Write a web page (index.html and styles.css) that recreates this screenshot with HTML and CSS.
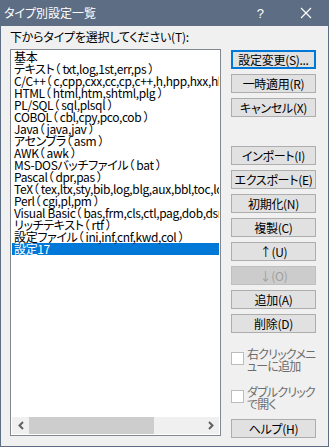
FILE: index.html
```html
<!DOCTYPE html>
<html lang="ja">
<head>
  <meta charset="UTF-8" />
  <meta name="viewport" content="width=device-width, initial-scale=1.0" />
  <title>タイプ別設定一覧</title>
  <link rel="stylesheet" href="styles.css">
</head>
<body>
  <div class="window">
    <div class="titlebar">
      <span class="title">タイプ別設定一覧</span>
      <span class="help">?</span>
      <span class="close">
        <svg width="12" height="12" viewBox="0 0 12 12"><path d="M1 1L11 11M11 1L1 11" stroke="#fff" stroke-width="1.2" fill="none"/></svg>
      </span>
    </div>
    <div class="content">
      <div class="left">
        <div class="caption">下からタイプを選択してください(T):</div>
        <div class="listbox">
          <ul class="items">
            <li>基本</li>
            <li>テキスト（ txt,log,1st,err,ps ）</li>
            <li>C/C++（ c,cpp,cxx,cc,cp,c++,h,hpp,hxx,hh,hh,inl ）</li>
            <li>HTML（ html,htm,shtml,plg ）</li>
            <li>PL/SQL（ sql,plsql ）</li>
            <li>COBOL（ cbl,cpy,pco,cob ）</li>
            <li>Java（ java,jav ）</li>
            <li>アセンブラ（ asm ）</li>
            <li>AWK（ awk ）</li>
            <li>MS-DOSバッチファイル（ bat ）</li>
            <li>Pascal（ dpr,pas ）</li>
            <li>TeX（ tex,ltx,sty,bib,log,blg,aux,bbl,toc,lof,lot ）</li>
            <li>Perl（ cgi,pl,pm ）</li>
            <li>Visual Basic（ bas,frm,cls,ctl,pag,dob,dsr ）</li>
            <li>リッチテキスト（ rtf ）</li>
            <li>設定ファイル（ ini,inf,cnf,kwd,col ）</li>
            <li class="selected">設定17</li>
          </ul>
          <div class="hscroll">
            <span class="arrow">
              <svg width="8" height="9" viewBox="0 0 8 9"><path d="M6 1L2.5 4.5L6 8" stroke="#606060" stroke-width="2" fill="none"/></svg>
            </span>
            <div class="track"><div class="thumb"></div></div>
            <span class="arrow">
              <svg width="8" height="9" viewBox="0 0 8 9"><path d="M2 1L5.5 4.5L2 8" stroke="#606060" stroke-width="2" fill="none"/></svg>
            </span>
          </div>
        </div>
      </div>
      <div class="right">
        <button class="default">設定変更(S)...</button>
        <button>一時適用(R)</button>
        <button>キャンセル(X)</button>
        <button class="group">インポート(I)</button>
        <button>エクスポート(E)</button>
        <button>初期化(N)</button>
        <button>複製(C)</button>
        <button>↑(U)</button>
        <button disabled>↓(O)</button>
        <button>追加(A)</button>
        <button>削除(D)</button>
        <label class="check first">
          <span class="box"></span>
          <span class="text">右クリックメニ<br>ューに追加</span>
        </label>
        <label class="check">
          <span class="box"></span>
          <span class="text">ダブルクリック<br>で開く</span>
        </label>
        <button class="help-btn">ヘルプ(H)</button>
      </div>
    </div>
  </div>
</body>
</html>
```

FILE: styles.css
```css
* {
  margin: 0;
  padding: 0;
  box-sizing: border-box;
}

body {
  font-family: "Noto Sans CJK JP", "Liberation Sans", sans-serif;
  font-size: 12px;
  font-feature-settings: "palt";
  color: #000;
  background: #f0f0f0;
}

.window {
  width: 329px;
  height: 447px;
  background: #f0f0f0;
  border: 1px solid #5d6d83;
  border-top: none;
  display: flex;
  flex-direction: column;
  overflow: hidden;
}

.titlebar {
  flex: none;
  height: 26px;
  background: #5d6d83;
  color: #fff;
  display: flex;
  align-items: center;
  padding-left: 3px;
}

.title {
  font-size: 12px;
  line-height: 14px;
}

.help {
  margin-left: auto;
  font-size: 13px;
  font-family: "Liberation Sans", sans-serif;
}

.close {
  display: flex;
  margin-left: 36px;
  margin-right: 16px;
}

.content {
  flex: 1;
  min-height: 0;
  display: flex;
  padding: 0 12px 0 9px;
  gap: 10px;
}

.left {
  width: 211px;
  display: flex;
  flex-direction: column;
}

.caption {
  line-height: 12px;
  margin-top: 5px;
  margin-bottom: 6px;
  white-space: nowrap;
  letter-spacing: -0.2px;
}

.listbox {
  height: 387px;
  flex: none;
  border: 1px solid #828790;
  background: #fff;
  padding: 1px;
  display: flex;
  flex-direction: column;
}

.items {
  list-style: none;
  flex: 1;
  overflow: hidden;
}

.items li {
  height: 12px;
  line-height: 12px;
  padding-left: 2px;
  white-space: nowrap;
  letter-spacing: -0.35px;
}

.items li.selected {
  background: #0078d7;
  color: #fff;
}

.hscroll {
  height: 17px;
  flex: none;
  background: #f0f0f0;
  display: flex;
}

.arrow {
  width: 17px;
  display: flex;
  align-items: center;
  justify-content: center;
}

.track {
  flex: 1;
  display: flex;
}

.thumb {
  width: 125px;
  background: #cdcdcd;
}

.right {
  width: 86px;
  display: flex;
  flex-direction: column;
  gap: 5px;
  padding-top: 24px;
}

button {
  height: 19px;
  flex: none;
  font-family: inherit;
  font-size: 12px;
  line-height: 12px;
  letter-spacing: -0.3px;
  white-space: nowrap;
  background: #e1e1e1;
  border: 1px solid #adadad;
  color: #000;
  font-feature-settings: "palt";
}

button.default {
  border: 2px solid #0078d7;
}

button.group {
  margin-top: 24px;
}

button:disabled {
  background: #cccccc;
  border-color: #bfbfbf;
  color: #a0a0a0;
}

.check {
  display: flex;
  gap: 3px;
  color: #6d6d6d;
  margin-top: 9px;
  height: 24px;
  flex: none;
}

.check.first {
  margin-top: 10px;
}

.box {
  width: 13px;
  height: 13px;
  margin-top: 4px;
  border: 1px solid #bcbcbc;
  background: #fff;
  flex: none;
}

.text {
  line-height: 12px;
  white-space: nowrap;
  letter-spacing: -0.8px;
}

.help-btn {
  margin-top: 4px;
}
```
